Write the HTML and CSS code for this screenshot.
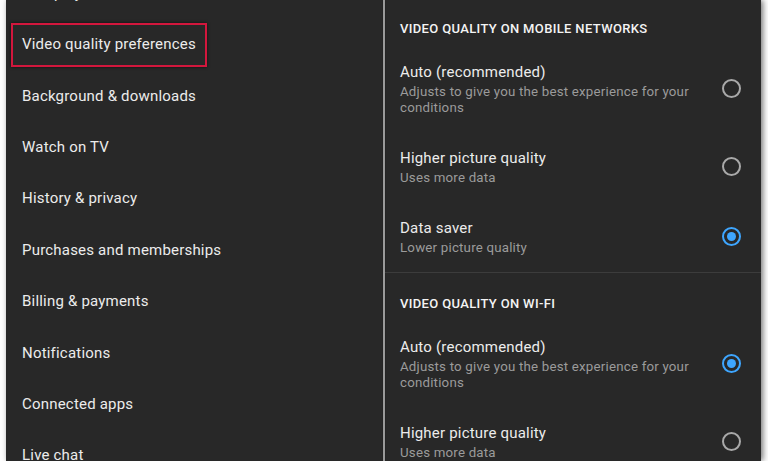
FILE: index.html
```html
<!DOCTYPE html>
<html lang="en">
<head>
<meta charset="utf-8">
<title>Settings - Video quality preferences</title>
<link rel="stylesheet" href="styles.css">
</head>
<body>
<div class="frame">
  <nav class="menu">
    <ul class="menu-list">
      <li class="menu-item">Autoplay</li>
      <li class="menu-item is-marked"><span class="mark"></span>Video quality preferences</li>
      <li class="menu-item">Background &amp; downloads</li>
      <li class="menu-item">Watch on TV</li>
      <li class="menu-item">History &amp; privacy</li>
      <li class="menu-item">Purchases and memberships</li>
      <li class="menu-item">Billing &amp; payments</li>
      <li class="menu-item">Notifications</li>
      <li class="menu-item">Connected apps</li>
      <li class="menu-item">Live chat</li>
    </ul>
  </nav>
  <div class="split"></div>
  <main class="detail">
    <section class="group">
      <h2 class="group-title">Video quality on mobile networks</h2>
      <div class="option">
        <div class="option-text">
          <div class="option-title">Auto (recommended)</div>
          <div class="option-sub">Adjusts to give you the best experience for your conditions</div>
        </div>
        <span class="radio"></span>
      </div>
      <div class="option">
        <div class="option-text">
          <div class="option-title">Higher picture quality</div>
          <div class="option-sub">Uses more data</div>
        </div>
        <span class="radio"></span>
      </div>
      <div class="option">
        <div class="option-text">
          <div class="option-title">Data saver</div>
          <div class="option-sub">Lower picture quality</div>
        </div>
        <span class="radio is-on"></span>
      </div>
    </section>
    <section class="group has-rule">
      <h2 class="group-title">Video quality on Wi-Fi</h2>
      <div class="option">
        <div class="option-text">
          <div class="option-title">Auto (recommended)</div>
          <div class="option-sub">Adjusts to give you the best experience for your conditions</div>
        </div>
        <span class="radio is-on"></span>
      </div>
      <div class="option">
        <div class="option-text">
          <div class="option-title">Higher picture quality</div>
          <div class="option-sub">Uses more data</div>
        </div>
        <span class="radio"></span>
      </div>
    </section>
  </main>
</div>
</body>
</html>
```
FILE: styles.css
```css
* { box-sizing: border-box; }
html, body {
  margin: 0;
  padding: 0;
  width: 768px;
  height: 461px;
  overflow: hidden;
  background: #ffffff;
}
body {
  font-family: Roboto, "Noto Sans", "Liberation Sans", sans-serif;
  padding-left: 6px;
}
.frame {
  width: 755px;
  height: 461px;
  display: flex;
  background: #282828;
  box-shadow: 2px 0 6px rgba(0, 0, 0, 0.55);
  overflow: hidden;
}
.menu {
  width: 377px;
  flex: none;
  overflow: hidden;
}
.menu-list {
  list-style: none;
  margin: -32.9px 0 0 0;
  padding: 0;
}
.menu-item {
  position: relative;
  height: 51.4px;
  display: flex;
  align-items: center;
  padding-left: 16px;
  font-size: 15px;
  color: #ececec;
  letter-spacing: 0.2px;
}
.mark {
  position: absolute;
  left: 5px;
  top: 4.6px;
  width: 196px;
  height: 44px;
  border: 2px solid #d3173d;
  box-shadow: 0 0 3px rgba(0, 0, 0, 0.6);
}
.split {
  width: 2px;
  flex: none;
  background: #9a9a9a;
  box-shadow: 0 0 1px rgba(0, 0, 0, 0.8);
}
.detail {
  flex: 1;
  margin-top: -2.5px;
  overflow: hidden;
}
.group.has-rule {
  border-top: 1px solid #3c3c3c;
}
.group-title {
  margin: 0;
  padding: 23.5px 15px 8.5px;
  font-size: 13px;
  line-height: 16px;
  font-weight: 500;
  text-transform: uppercase;
  color: #f4f4f4;
  letter-spacing: 0.35px;
}
.option {
  display: flex;
  align-items: center;
  padding: 16.5px 20px 15.5px 15px;
}
.option-text {
  flex: 1;
  padding-right: 30px;
}
.option-title {
  font-size: 15px;
  line-height: 21px;
  color: #ececec;
  letter-spacing: 0.2px;
}
.option-sub {
  margin-top: 1px;
  font-size: 13.3px;
  line-height: 16px;
  color: #9b9b9b;
  letter-spacing: 0.2px;
}
.radio {
  flex: none;
  width: 19px;
  height: 19px;
  margin-top: -2px;
  border-radius: 50%;
  border: 2px solid #a9a9a9;
  display: flex;
  align-items: center;
  justify-content: center;
}
.radio.is-on {
  border-color: #3ea6ff;
}
.radio.is-on::after {
  content: "";
  width: 9px;
  height: 9px;
  border-radius: 50%;
  background: #3ea6ff;
}
```
